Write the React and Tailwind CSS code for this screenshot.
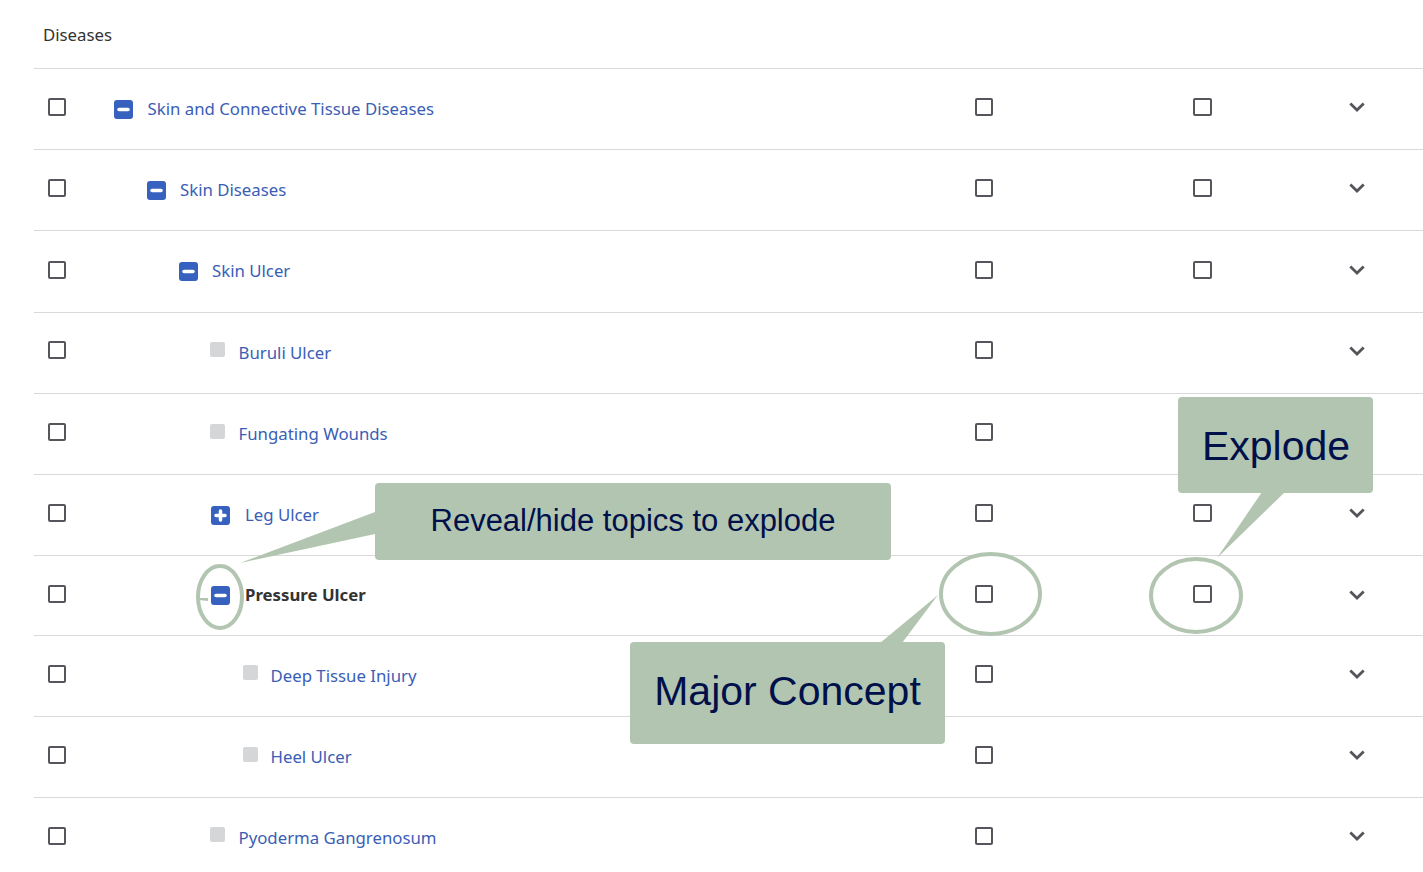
import React from "react";

const rows = [
  { name: "Skin and Connective Tissue Diseases", height: "h-[81px]", pad: "pl-0", gap: "gap-[14.5px]", icon: "minus", explode: true },
  { name: "Skin Diseases", height: "h-[81px]", pad: "pl-[33px]", gap: "gap-[14px]", icon: "minus", explode: true },
  { name: "Skin Ulcer", height: "h-[82px]", pad: "pl-[65px]", gap: "gap-[14px]", icon: "minus", explode: true, text: "pb-[2px]" },
  { name: "Buruli Ulcer", height: "h-[81px]", pad: "pl-[96px]", gap: "gap-[13.5px]", icon: "leaf", check: "mb-[6px]" },
  { name: "Fungating Wounds", height: "h-[81px]", pad: "pl-[96px]", gap: "gap-[13.5px]", icon: "leaf", leaf: "mb-[6px]" },
  { name: "Leg Ulcer", height: "h-[81px]", pad: "pl-[97px]", gap: "gap-[15px]", icon: "plus", explode: true },
  { name: "Pressure Ulcer", height: "h-[80px]", pad: "pl-[97px]", gap: "gap-[15px]", icon: "minus", explode: true, bold: true, text: "pb-[2px]", chevron: "mb-[2px]" },
  { name: "Deep Tissue Injury", height: "h-[81px]", pad: "pl-[129px]", gap: "gap-[12.5px]", icon: "leaf" },
  { name: "Heel Ulcer", height: "h-[81px]", pad: "pl-[129px]", gap: "gap-[12.5px]", icon: "leaf", leaf: "mb-[6px]" },
  { name: "Pyoderma Gangrenosum", height: "h-[81px]", pad: "pl-[96px]", gap: "gap-[13.5px]", icon: "leaf" },
];

const Checkbox = ({ wide, className = "mb-[4px]" }) => (
  <div className={`${wide ? "w-[19px]" : "w-[18px]"} h-[18px] ${className} border-2 border-[#55565b] rounded-[2px] bg-white`} />
);

const TreeIcon = ({ type, leaf = "mb-[8px]" }) => {
  if (type === "leaf") {
    return <div className={`w-[15px] h-[15px] ${leaf} rounded-[2px] bg-[#d5d6d8]`} />;
  }
  return (
    <svg width="19" height="19" viewBox="0 0 19 19" fill="none">
      <rect width="19" height="19" rx="3" fill="#3761be" />
      <path d={type === "plus" ? "M5 9.5H14M9.5 5V14" : "M5 9.5H14"} stroke="white" strokeWidth="3.5" strokeLinecap="round" />
    </svg>
  );
};

const Chevron = ({ className = "mb-[4px]" }) => (
  <svg className={`${className} -ml-[1px]`} width="16" height="10" viewBox="0 0 16 10" fill="none">
    <path d="M1.3 1.5 L8 8 L14.7 1.5" stroke="#55565b" strokeWidth="2.8" />
  </svg>
);

const Row = ({ row }) => (
  <div className={`${row.height} grid grid-cols-[80px_861px_218px_157px_1fr] items-center border-t border-[#d9d9d9]`}>
    <div className="pl-[14px]">
      <Checkbox className={row.check} />
    </div>
    <div className={`flex items-center ${row.pad} ${row.gap}`}>
      <TreeIcon type={row.icon} leaf={row.leaf} />
      {row.bold ? (
        <span className={`font-bold text-[#333333] ${row.text || ""}`}>{row.name}</span>
      ) : (
        <span className={`text-[#3a5eb5] ${row.text || ""}`}>{row.name}</span>
      )}
    </div>
    <div>
      <Checkbox className={row.check} />
    </div>
    <div>{row.explode && <Checkbox wide />}</div>
    <div>
      <Chevron className={row.chevron} />
    </div>
  </div>
);

const Callouts = () => (
  <>
    <svg className="absolute left-0 top-0" width="1423" height="872" viewBox="0 0 1423 872" fill="none">
      <polygon points="375,512 375,534 240,563" fill="#b2c5b0" />
      <polygon points="1262,492 1285,492 1217,558" fill="#b2c5b0" />
      <polygon points="938,595 880,643 902,643" fill="#b2c5b0" />
      <polygon points="199,598 208,598 208,601 199,600" fill="#b2c5b0" />
      <ellipse cx="220" cy="597" rx="22" ry="31" stroke="#b2c5b0" strokeWidth="4" />
      <ellipse cx="990.5" cy="594" rx="49.5" ry="40" stroke="#b2c5b0" strokeWidth="4" />
      <ellipse cx="1196" cy="595.5" rx="45" ry="36.5" stroke="#b2c5b0" strokeWidth="4" />
    </svg>
    <div className="absolute left-[1178px] top-[397px] w-[195px] h-[96px] pt-[3px] pl-[1px] rounded-[4px] bg-[#b2c5b0] flex items-center justify-center font-['Liberation_Sans',sans-serif] text-[41px] text-[#00104a]">
      Explode
    </div>
    <div className="absolute left-[375px] top-[483px] w-[516px] h-[77px] rounded-[4px] bg-[#b2c5b0] flex items-center justify-center font-['Liberation_Sans',sans-serif] text-[31px] text-[#00104a]">
      Reveal/hide topics to explode
    </div>
    <div className="absolute left-[630px] top-[642px] w-[315px] h-[102px] pb-[3px] rounded-[4px] bg-[#b2c5b0] flex items-center justify-center font-['Liberation_Sans',sans-serif] text-[41px] text-[#00104a]">
      Major Concept
    </div>
  </>
);

export default function App() {
  return (
    <div className="relative h-[872px] overflow-hidden bg-white font-['Noto_Sans',sans-serif] text-[16.8px]">
      <div className="pl-[34px]">
        <div className="h-[68px] pl-[9px] pt-[2px] flex items-center text-[#333333]">Diseases</div>
        {rows.map((row) => (
          <Row key={row.name} row={row} />
        ))}
      </div>
      <Callouts />
    </div>
  );
}
